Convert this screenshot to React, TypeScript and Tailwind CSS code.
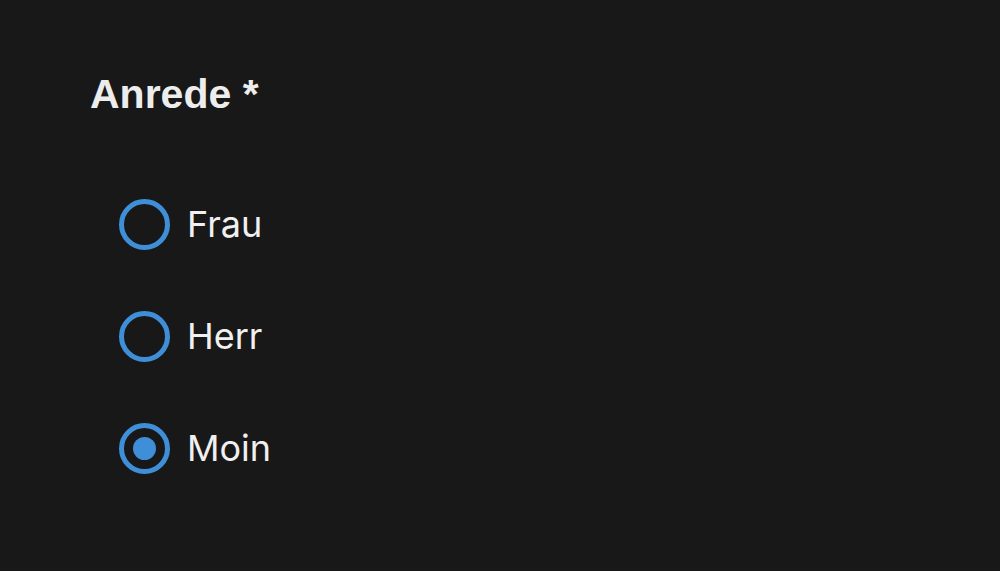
import React, { useState } from "react";

const options = ["Frau", "Herr", "Moin"];

export default function App() {
  const [value, setValue] = useState("Moin");
  return (
    <div className="w-[1000px] h-[571px] bg-[#181818] text-[#ededed] overflow-hidden">
      <div className="pl-[90px] pt-[70px]">
        <h1
          className="text-[41px] leading-[48px] font-bold"
          style={{ fontFamily: '"Liberation Sans", Arial, sans-serif' }}
        >
          Anrede *
        </h1>
        <div className="mt-[81px] pl-[29px] flex flex-col gap-[62px]">
          {options.map((o) => (
            <label
              key={o}
              className="flex items-center gap-[17px] h-[50px] cursor-pointer"
              onClick={() => setValue(o)}
            >
              <span className="w-[51px] h-[51px] rounded-full border-[5px] border-[#3f8fd8] flex items-center justify-center">
                {value === o && <span className="w-[23px] h-[23px] rounded-full bg-[#3f8fd8]" />}
              </span>
              <span
                className="text-[36px] leading-[50px] text-[#f0f0f0]"
                style={{ fontFamily: 'Inter, "Noto Sans", sans-serif' }}
              >
                {o}
              </span>
            </label>
          ))}
        </div>
      </div>
    </div>
  );
}
